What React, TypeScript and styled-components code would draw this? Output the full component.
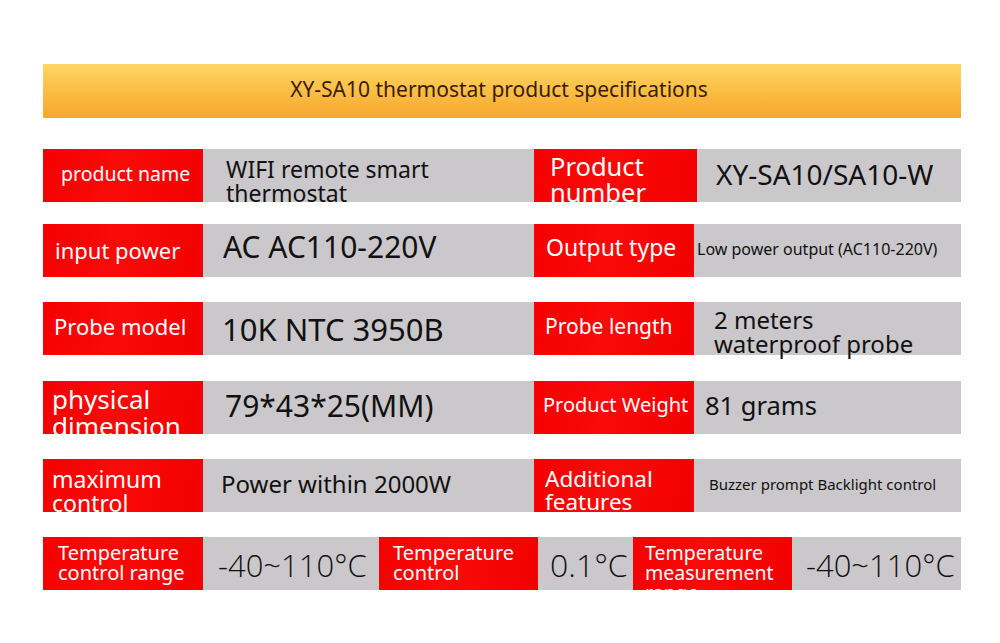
import styled, { createGlobalStyle } from 'styled-components';

const GlobalStyle = createGlobalStyle`
  html, body {
    margin: 0;
    padding: 0;
    background: #ffffff;
  }
  body {
    font-family: 'Noto Sans', 'Open Sans', sans-serif;
  }
`;

interface CellProps {
  $w?: number;
  $grow?: boolean;
}

interface TextProps {
  $size: number;
  $lh: number;
  $x: number;
  $top: number;
  $light?: boolean;
}

interface RowProps {
  $mt: number;
}

const Page = styled.div`
  width: 1000px;
  height: 643px;
  box-sizing: border-box;
  padding: 64px 39px 0 43px;
  background: #ffffff;
`;

const Banner = styled.div`
  height: 54px;
  box-sizing: border-box;
  display: flex;
  align-items: center;
  justify-content: center;
  background: linear-gradient(180deg, #fed664 0%, #fbbe45 50%, #f6a62d 100%);
  color: #3a1d00;
  font-size: 21px;
  padding: 0 6px 4px 0;
`;

const Table = styled.div`
  display: flex;
  flex-direction: column;
`;

const Row = styled.div<RowProps>`
  display: flex;
  height: 53px;
  margin-top: ${p => p.$mt}px;
`;

// red name cell: text that runs past it is cut, as on the sheet
const Label = styled.div<CellProps>`
  width: ${p => p.$w ?? 160}px;
  flex-shrink: 0;
  overflow: hidden;
  background: linear-gradient(100deg, #f40000 0%, #fb0a0a 45%, #f20000 100%);
  color: #ffffff;
  display: flex;
  align-items: flex-start;
`;

const Value = styled.div<CellProps>`
  width: ${p => (p.$grow ? 'auto' : `${p.$w}px`)};
  flex: ${p => (p.$grow ? 1 : '0 0 auto')};
  background: #cac8ca;
  color: #111111;
  display: flex;
  align-items: flex-start;
  white-space: nowrap;
`;

const Text = styled.div<TextProps>`
  font-size: ${p => p.$size}px;
  line-height: ${p => p.$lh}px;
  padding-left: ${p => p.$x}px;
  padding-top: ${p => p.$top}px;
  font-weight: ${p => (p.$light ? 300 : 400)};
  font-family: ${p => (p.$light ? "'Open Sans', 'Noto Sans', sans-serif" : 'inherit')};
  white-space: pre;
`;

const App = () => {
  return (
    <>
      <GlobalStyle />
      <Page>
        <Banner>XY-SA10 thermostat product specifications</Banner>
        <Table>
          <Row $mt={31}>
            <Label>
              <Text $size={19.5} $lh={22} $x={18} $top={14}>product name</Text>
            </Label>
            <Value $w={331}>
              <Text $size={23} $lh={24} $x={23} $top={8}>{'WIFI remote smart\nthermostat'}</Text>
            </Value>
            <Label $w={163}>
              <Text $size={25.5} $lh={26} $x={16} $top={4}>{'Product\nnumber'}</Text>
            </Label>
            <Value $grow>
              <Text $size={28} $lh={32} $x={19} $top={9}>XY-SA10/SA10-W</Text>
            </Value>
          </Row>

          <Row $mt={22}>
            <Label>
              <Text $size={22} $lh={26} $x={12} $top={13}>input power</Text>
            </Label>
            <Value $w={331}>
              <Text $size={30} $lh={34} $x={20} $top={6}>AC AC110-220V</Text>
            </Value>
            <Label>
              <Text $size={23} $lh={26} $x={12} $top={10}>Output type</Text>
            </Label>
            <Value $grow>
              <Text $size={16} $lh={20} $x={3} $top={15}>Low power output (AC110-220V)</Text>
            </Value>
          </Row>

          <Row $mt={25}>
            <Label>
              <Text $size={22} $lh={24} $x={11} $top={12}>Probe model</Text>
            </Label>
            <Value $w={331}>
              <Text $size={31} $lh={36} $x={19} $top={9}>10K NTC 3950B</Text>
            </Value>
            <Label>
              <Text $size={21} $lh={24} $x={11} $top={12}>Probe length</Text>
            </Label>
            <Value $grow>
              <Text $size={24} $lh={24} $x={20} $top={6}>{'2 meters\nwaterproof probe'}</Text>
            </Value>
          </Row>

          <Row $mt={26}>
            <Label>
              <Text $size={26} $lh={27} $x={9} $top={5}>{'physical\ndimension'}</Text>
            </Label>
            <Value $w={331}>
              <Text $size={30} $lh={34} $x={22} $top={8}>79*43*25(MM)</Text>
            </Value>
            <Label>
              <Text $size={20} $lh={24} $x={9} $top={12}>Product Weight</Text>
            </Label>
            <Value $grow>
              <Text $size={25.5} $lh={30} $x={11} $top={9}>81 grams</Text>
            </Value>
          </Row>

          <Row $mt={25}>
            <Label>
              <Text $size={23} $lh={24} $x={9} $top={8}>{'maximum\ncontrol'}</Text>
            </Label>
            <Value $w={331}>
              <Text $size={24} $lh={28} $x={18} $top={11}>Power within 2000W</Text>
            </Value>
            <Label>
              <Text $size={22.5} $lh={23} $x={11} $top={8}>{'Additional\nfeatures'}</Text>
            </Label>
            <Value $grow>
              <Text $size={15} $lh={18} $x={15} $top={16}>Buzzer prompt Backlight control</Text>
            </Value>
          </Row>

          <Row $mt={25}>
            <Label>
              <Text $size={20} $lh={20} $x={15} $top={6}>{'Temperature\ncontrol range'}</Text>
            </Label>
            <Value $w={176}>
              <Text $size={31} $lh={36} $x={15} $top={10} $light>-40~110°C</Text>
            </Value>
            <Label $w={159}>
              <Text $size={20} $lh={20} $x={14} $top={6}>{'Temperature\ncontrol'}</Text>
            </Label>
            <Value $w={95}>
              <Text $size={32} $lh={36} $x={12} $top={10} $light>0.1°C</Text>
            </Value>
            <Label $w={159}>
              <Text $size={19.5} $lh={20} $x={12} $top={6}>{'Temperature\nmeasurement\nrange'}</Text>
            </Label>
            <Value $grow>
              <Text $size={31} $lh={36} $x={14} $top={10} $light>-40~110°C</Text>
            </Value>
          </Row>
        </Table>
      </Page>
    </>
  );
};

export default App;
